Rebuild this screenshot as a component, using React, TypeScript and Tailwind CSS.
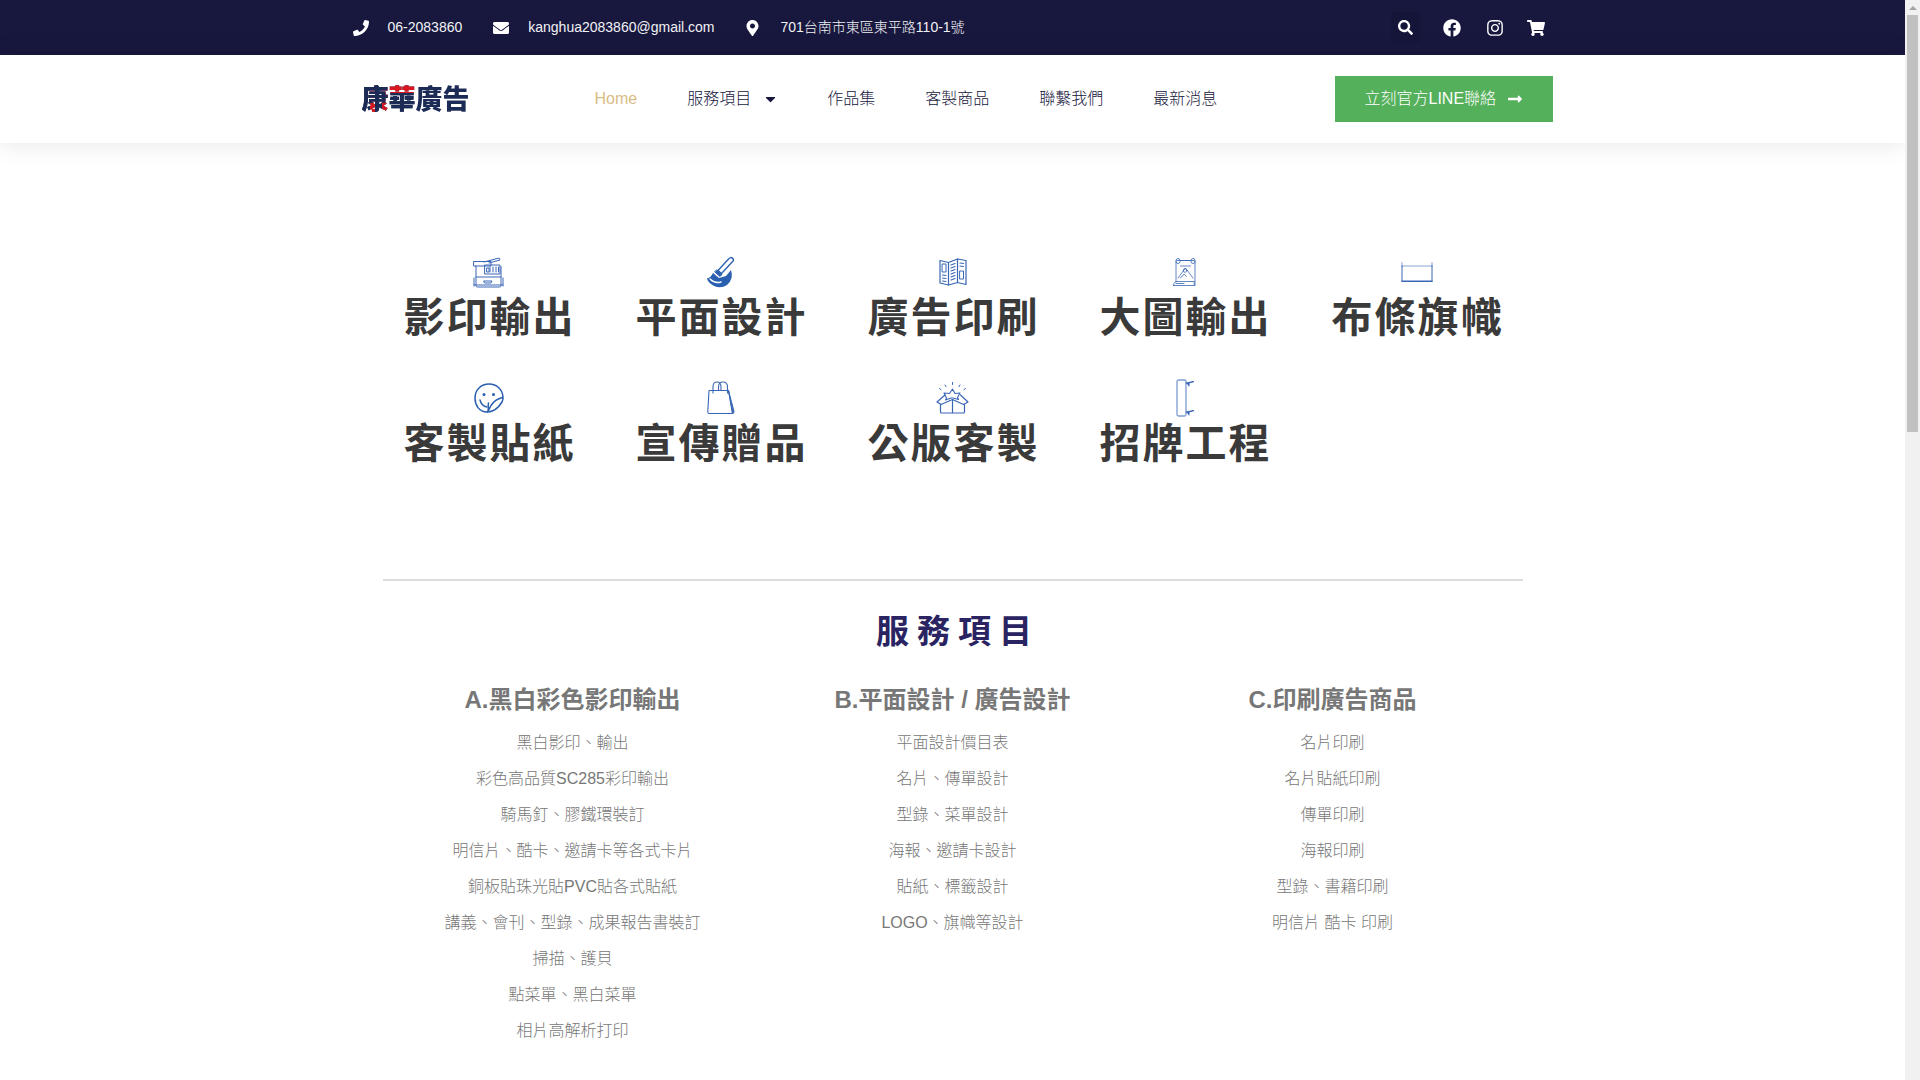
import type { ReactNode } from "react";
import {
  FaCaretDown,
  FaEnvelope,
  FaFacebook,
  FaInstagram,
  FaLongArrowAltRight,
  FaMapMarkerAlt,
  FaPhone,
  FaSearch,
  FaShoppingCart,
} from "react-icons/fa";

function Line({ w, h, children }: { w: number; h: number; children: ReactNode }) {
  return (
    <svg
      width={w}
      height={h}
      viewBox={`0 0 ${w} ${h}`}
      fill="none"
      stroke="#3a67b5"
      strokeWidth="1"
      strokeLinecap="round"
      strokeLinejoin="round"
    >
      {children}
    </svg>
  );
}

const PrinterIcon = () => (
  <Line w={31} h={31}>
    <path d="M1 4.500h17v4.500H1zM3 9v19.500q0 1.500 1.500 1.500h22q1.500 0 1.500-1.500V9.500" />
    <path d="M11 5l15-4 1 2-11 3" />
    <rect x="12" y="8" width="15" height="9" />
    <path d="M17 10v5M20 10v5M23 10v5M25.500 10v5M14 11h2v4h-2zM3 20h25M1 21v8M30 21v8M1 28h29M11 24h8l-1 2h-6z" />
  </Line>
);

const BrushIcon = () => (
  <Line w={29} h={33}>
    <path d="M25 1.500q2.500.500 2.500 3L15.500 17.500l-3.500-3L23 2.500z" strokeWidth="1.300" stroke="#2b5fb0" />
    <path d="M11 14l5 4.500-2 2-5-4.500z" fill="#2b5fb0" stroke="#2b5fb0" />
    <path d="M7 17l6 5 7-2 5-6q3 9-4 15-6 4-13 1-7-4-7-8 3 1 6-5z" fill="#2b5fb0" stroke="none" />
    <path d="M4 23q5 5 11 3" stroke="#fff" strokeWidth="1.400" />
  </Line>
);

const BookIcon = () => (
  <Line w={28} h={28}>
    <path d="M1 2.500l8.500 2 9-3.500L27 2.500v24l-8.500-2L9.500 27 1 25z" strokeWidth="1.200" />
    <path d="M9.500 4.500V27M18.500 1v23.500" strokeWidth="1.200" />
    <rect x="3.500" y="6" width="3.500" height="8" />
    <rect x="21" y="13" width="3.500" height="8" />
    <path d="M3.500 17l3.500.500M3.500 20l3.500.500M3.500 23l3.500.500M12 7l4-1.500M12 10l4-1.500M12 13l4-1.500M12 16l4-1.500M12 19l4-1.500M12 22l4-1.500M21 5l3.500.500M21 8l3.500.500" strokeWidth="1.200" />
  </Line>
);

const PosterIcon = () => (
  <Line w={24} h={28}>
    <path d="M3 24V3.500q0-1 1-1h17q1 0 1 1V27" strokeWidth="0.800" />
    <rect x="3" y="0.500" width="4" height="5" rx="2" strokeWidth="0.800" />
    <rect x="18" y="0.500" width="4" height="5" rx="2" strokeWidth="0.800" />
    <path d="M7 2.500h11M7.500 8h10M5 20l7.500-10L20 20" strokeWidth="0.800" />
    <circle cx="12" cy="12.500" r="1.800" strokeWidth="0.800" />
    <path d="M7.500 20l3.500-4 2.500 2.500M0.500 27.500h21.500q-2-2-.5-4H2.500q-2 1.500-2 4zM3 25.500h8" strokeWidth="0.800" />
  </Line>
);

const BannerIcon = () => (
  <Line w={32} h={20}>
    <path d="M1 4h30M1 0.500v4M31 0.500v4" strokeWidth="0.600" />
    <path d="M1 4v15M31 4v15" strokeWidth="1" />
    <path d="M1 19.300h30" strokeWidth="1.500" />
  </Line>
);

const SmileIcon = () => (
  <Line w={30} h={30}>
    <g strokeWidth="1.500" stroke="#2b5fb0">
      <path d="M13 29C5 29 1 22 1 15 1 7 7 1 15 1s14 6 14 14c0 2-.5 3-1 4-3 5-8 10-15 10z" />
      <path d="M28.500 14.500c-4 1-9 4-11.500 8-1 2-2 4.500-3.500 6.500 2-4 0-6 1-9" />
      <path d="M6 17c1 4 4 6.500 7 7" />
    </g>
    <circle cx="10" cy="11.500" r="1.500" fill="#2b5fb0" stroke="none" />
    <circle cx="19.500" cy="11.500" r="1.500" fill="#2b5fb0" stroke="none" />
  </Line>
);

const BagIcon = () => (
  <Line w={28} h={34}>
    <path d="M2 9.500L0.800 31q0 1.500 1.500 1.500h23.500L21.500 9.500z" strokeWidth="1.100" />
    <path d="M21.500 9.500l5.500 21q0 2-1.200 2z" fill="#3a67b5" />
    <path d="M6 12V6q0-5 4-5t4 5v3.500M11.500 9.500V6q0-5 4.500-5t4.500 5v6" strokeWidth="1.100" />
  </Line>
);

const BoxIcon = () => (
  <Line w={33} h={32}>
    <path d="M16.500 0.500v3M9 3l1.500 2.500M24 3l-1.500 2.500M3.500 6.500l2 1.500M29.500 6.500l-2 1.500" strokeDasharray="2 1" />
    <path d="M16.500 7l2.500 4.500 5-.500-2.500 4.500 1 2-5.500-1.500h-2L9.500 18l1-2L8 11l5.500.500z" strokeWidth="1.100" />
    <path d="M9 13L1 20l4 2.500 11.500-5 11 5 4.500-2.500-7.500-7" strokeWidth="1.200" />
    <path d="M4.500 22.500V30q0 1 1 1h22q1 0 1-1v-7.500M16.500 18v13" strokeWidth="1.200" />
  </Line>
);

const SignIcon = () => (
  <Line w={20} h={38}>
    <rect x="2" y="1" width="9" height="36" rx="1.500" strokeWidth="1.300" stroke="#7d9cd3" />
    <path d="M11 4l8-1.500-5 1.500v3M11 33l8-1.500-5 1.500v3" fill="#3a67b5" />
  </Line>
);

const services = [
  { icon: <PrinterIcon />, label: "影印輸出" },
  { icon: <BrushIcon />, label: "平面設計" },
  { icon: <BookIcon />, label: "廣告印刷" },
  { icon: <PosterIcon />, label: "大圖輸出" },
  { icon: <BannerIcon />, label: "布條旗幟" },
  { icon: <SmileIcon />, label: "客製貼紙" },
  { icon: <BagIcon />, label: "宣傳贈品" },
  { icon: <BoxIcon />, label: "公版客製" },
  { icon: <SignIcon />, label: "招牌工程" },
];

const columns = [
  {
    title: "A.黑白彩色影印輸出",
    items: [
      "黑白影印、輸出",
      "彩色高品質SC285彩印輸出",
      "騎馬釘、膠鐵環裝訂",
      "明信片、酷卡、邀請卡等各式卡片",
      "銅板貼珠光貼PVC貼各式貼紙",
      "講義、會刊、型錄、成果報告書裝訂",
      "掃描、護貝",
      "點菜單、黑白菜單",
      "相片高解析打印",
    ],
  },
  {
    title: "B.平面設計 / 廣告設計",
    items: [
      "平面設計價目表",
      "名片、傳單設計",
      "型錄、菜單設計",
      "海報、邀請卡設計",
      "貼紙、標籤設計",
      "LOGO、旗幟等設計",
    ],
  },
  {
    title: "C.印刷廣告商品",
    items: [
      "名片印刷",
      "名片貼紙印刷",
      "傳單印刷",
      "海報印刷",
      "型錄、書籍印刷",
      "明信片 酷卡 印刷",
    ],
  },
];

function TopBar() {
  return (
    <div className="h-[55px] bg-[#18183f] text-[14px] font-light text-[#f2f2f5]">
      <div className="mx-auto flex h-full w-[1200px] items-center">
        <FaPhone className="size-4 text-white" />
        <span className="ml-[19px]">06-2083860</span>
        <FaEnvelope className="ml-[31px] size-4 text-white" />
        <span className="ml-[19px]">kanghua2083860@gmail.com</span>
        <FaMapMarkerAlt className="ml-[32px] size-4 w-[13px] text-white" />
        <span className="ml-[21px]">701台南市東區東平路110-1號</span>
        <div className="ml-auto flex items-center pr-[8px] text-white">
          <div className="flex h-[31px] w-[29px] items-center justify-center bg-[#15153a]">
            <FaSearch className="size-[15px]" />
          </div>
          <FaFacebook className="ml-[23px] size-[18px]" />
          <FaInstagram className="ml-[25px] size-[18px]" />
          <FaShoppingCart className="ml-[23px] size-[18px]" />
        </div>
      </div>
    </div>
  );
}

function NavBar() {
  return (
    <div className="h-[88px] bg-white shadow-[0_0_24px_rgba(0,0,0,0.11)]">
      <div className="mx-auto flex h-full w-[1200px] items-center text-[16px] font-light text-[#16163c]">
        <div className="w-[242px] pt-[2px] pl-[9px]">
          <div className="w-fit bg-[linear-gradient(#1b2b55_0_60%,transparent_60%),linear-gradient(90deg,#1b2b55_30%,#d8171e_30%,#d8171e_50%,#1b2b55_50%,#1b2b55_75%,#d8171e_75%),linear-gradient(#d8171e_0_28%,#1b2b55_28%),linear-gradient(#1b2b55,#1b2b55)] bg-[length:25%_100%,25%_100%,25%_100%,100%_100%] bg-[position:0_0,0_0,33.33%_0,0_0] bg-no-repeat bg-clip-text text-[27px] leading-[32px] font-black text-transparent">
            康華廣告
          </div>
        </div>
        <div className="flex items-center gap-[50px]">
          <span className="text-[#d9bd85]">Home</span>
          <span className="flex items-center">
            服務項目
            <FaCaretDown className="ml-[13px] size-4 w-[13px]" />
          </span>
          <span>作品集</span>
          <span>客製商品</span>
          <span>聯繫我們</span>
          <span>最新消息</span>
        </div>
        <div className="ml-auto flex h-[46px] w-[218px] items-center bg-[#54b05a] pl-[30px] text-white">
          立刻官方LINE聯絡
          <FaLongArrowAltRight className="ml-[11px] size-4" />
        </div>
      </div>
    </div>
  );
}

function Scrollbar() {
  return (
    <aside className="flex h-full w-[15px] shrink-0 flex-col items-center bg-[#f1f1f1]">
      <div className="flex h-[15px] items-center justify-center">
        <div className="size-0 border-x-[4px] border-b-[4px] border-x-transparent border-b-[#a3a3a3]" />
      </div>
      <div className="h-[417px] w-[11px] bg-[#c1c1c1]" />
    </aside>
  );
}

export default function App() {
  return (
    <div className="flex h-screen w-full overflow-hidden bg-white font-['Liberation_Sans','Noto_Sans_CJK_TC',sans-serif]">
      <div className="min-w-0 flex-1">
        <TopBar />
        <NavBar />

        {/* Service icons */}
        <div className="mx-auto grid w-[1160px] grid-cols-5 gap-y-[42px] pt-[109px]">
          {services.map((s) => (
            <div key={s.label} className="flex flex-col items-center">
              <div className="flex h-[40px] items-center justify-center">{s.icon}</div>
              <div className="pl-[2px] font-['Noto_Sans_CJK_TC',sans-serif] text-[41px] leading-[44px] font-bold tracking-[2px] text-[#3a3a3a]">
                {s.label}
              </div>
            </div>
          ))}
        </div>

        <div className="mx-auto mt-[117px] w-[1140px] border-t-2 border-[#dddddd]">
          <h2 className="mt-[31px] pl-[11px] text-center text-[33px] leading-[40px] font-bold tracking-[8px] text-[#2a2562]">
            服務項目
          </h2>
          <div className="mt-[30px] grid grid-cols-3">
            {columns.map((col) => (
              <div key={col.title} className="text-center text-[#777777]">
                <h3 className="text-[24px] leading-[36px] font-bold">{col.title}</h3>
                <ul className="mt-[7px] text-[16px] leading-[36px] font-light">
                  {col.items.map((item) => (
                    <li key={item}>{item}</li>
                  ))}
                </ul>
              </div>
            ))}
          </div>
        </div>
      </div>
      <Scrollbar />
    </div>
  );
}
